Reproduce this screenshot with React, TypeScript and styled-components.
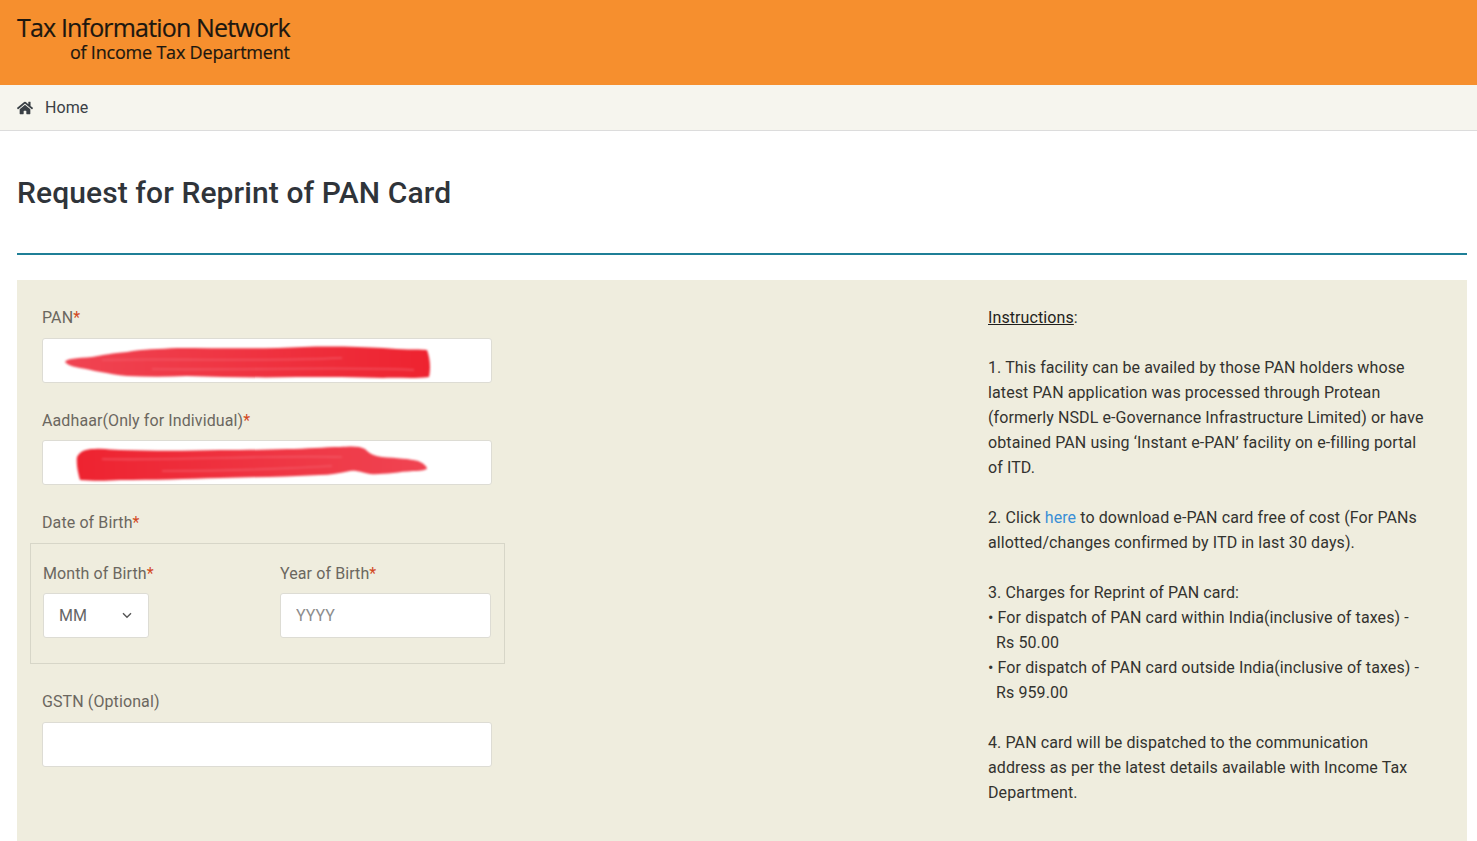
import React from 'react'
import styled, { createGlobalStyle } from 'styled-components'
import { FaHome } from 'react-icons/fa'

const GlobalStyle = createGlobalStyle`
  html, body {
    margin: 0;
    padding: 0;
    background: #fff;
    font-family: Roboto, "Liberation Sans", sans-serif;
    overflow: hidden;
  }
`;

const Banner = styled.header`
  height: 85px;
  background: #f68f2e;
  padding-left: 17px;
  box-sizing: border-box;
`;

const Logo = styled.div`
  display: inline-flex;
  flex-direction: column;
  align-items: flex-end;
  padding-top: 11px;
  font-family: "Open Sans", sans-serif;
  color: #1c1710;
  -webkit-text-stroke: 0.2px #1c1710;
`;

const LogoMain = styled.span`
  font-size: 25px;
  line-height: 32px;
  letter-spacing: -0.83px;
`;

const LogoSub = styled.span`
  font-size: 18px;
  line-height: 19px;
  letter-spacing: -0.2px;
`;

const NavBar = styled.nav`
  height: 46px;
  box-sizing: border-box;
  background: #f6f5ee;
  border-bottom: 1px solid #dcdcdc;
  display: flex;
  align-items: center;
  padding-left: 17px;
  gap: 12px;
  color: #3a4046;
  font-size: 16px;
  letter-spacing: 0.1px;
`;

const Main = styled.main`
  padding: 1px 10px 0 17px;
`;

const Title = styled.h1`
  margin: 0;
  height: 123px;
  box-sizing: border-box;
  padding-top: 41px;
  font-size: 30px;
  line-height: 40px;
  font-weight: 500;
  letter-spacing: 0.1px;
  color: #2f343a;
  border-bottom: 2px solid #1f7f97;
`;

const Panel = styled.section`
  margin-top: 25px;
  background: #efedde;
  padding: 25px 39px 60px 25px;
  display: grid;
  grid-template-columns: 450px 440px;
  justify-content: space-between;
`;

const FormColumn = styled.div`
  display: flex;
  flex-direction: column;
`;

const Field = styled.div`
  display: flex;
  flex-direction: column;
  margin-bottom: 25px;
  &:last-child { margin-bottom: 0; }
`;

const Label = styled.label<{ $gap?: number }>`
  font-size: 16px;
  line-height: 25px;
  color: #6b675f;
  letter-spacing: 0.1px;
  white-space: nowrap;
  margin-bottom: ${p => p.$gap ?? 8}px;
`;

const Req = styled.span`
  color: #d2491e;
`;

const InputWrap = styled.div`
  position: relative;
  height: 45px;
`;

const TextInput = styled.input`
  display: block;
  width: 100%;
  height: 45px;
  box-sizing: border-box;
  border: 1px solid #dddcd4;
  border-radius: 3px;
  background: #fff;
  padding: 0 15px;
  font-family: Roboto, sans-serif;
  font-size: 16px;
  color: #555;
  outline: none;
  &::placeholder { color: #8d8d8d; opacity: 1; }
`;

const Scribble = styled.svg`
  position: absolute;
  left: 0;
  top: 0;
  width: 450px;
  height: 45px;
  pointer-events: none;
  filter: blur(0.9px);
`;

const DobGroup = styled.fieldset`
  margin: 0 -13px 25px -12px;
  padding: 17px 13px 25px 12px;
  border: 1px solid #d7d6c8;
  display: grid;
  grid-template-columns: 106px 211px;
  justify-content: space-between;
`;

const SubField = styled.div`
  display: flex;
  flex-direction: column;
`;

const SelectWrap = styled.div`
  position: relative;
  height: 45px;
`;

const MonthSelect = styled.select`
  appearance: none;
  display: block;
  width: 100%;
  height: 45px;
  box-sizing: border-box;
  border: 1px solid #dddcd4;
  border-radius: 3px;
  background: #fff;
  padding: 0 15px;
  font-family: Roboto, sans-serif;
  font-size: 16px;
  color: #666;
  outline: none;
`;

const Chevron = styled.svg`
  position: absolute;
  right: 17px;
  top: 19px;
  width: 10px;
  height: 7px;
  pointer-events: none;
`;

const Instructions = styled.div`
  font-size: 16px;
  line-height: 25px;
  color: #33332f;
  letter-spacing: 0.1px;
`;

const Heading = styled.u`
  color: #1f1f1c;
`;

const Para = styled.p`
  margin: 25px 0 0;
`;

const Bullet = styled.div`
  padding-left: 8px;
  text-indent: -8px;
`;

const Link = styled.a`
  color: #3a8fd6;
  text-decoration: none;
`;

const Redaction: React.FC<{ id: string; shape: string; streaks: string[]; dark: [string, string] }> = ({ id, shape, streaks, dark }) => (
    <Scribble viewBox="0 0 450 45">
        <defs>
            <linearGradient id={id} x1="0" x2="1" y1="0" y2="0">
                <stop offset="0" stopColor={dark[0]} />
                <stop offset="1" stopColor={dark[1]} />
            </linearGradient>
        </defs>
        <path d={shape} fill={`url(#${id})`} />
        {streaks.map(s => (
            <path key={s} d={s} fill="none" stroke="#f4606c" strokeOpacity="0.7" strokeWidth="1.6" />
        ))}
    </Scribble>
);

const App: React.FC = () => {
    return (
        <>
            <GlobalStyle />
            <Banner>
                <Logo>
                    <LogoMain>Tax Information Network</LogoMain>
                    <LogoSub>of Income Tax Department</LogoSub>
                </Logo>
            </Banner>
            <NavBar>
                <FaHome size={16} />
                <span>Home</span>
            </NavBar>
            <Main>
                <Title>Request for Reprint of PAN Card</Title>
                <Panel>
                    <FormColumn>
                        <Field>
                            <Label>PAN<Req>*</Req></Label>
                            <InputWrap>
                                <TextInput />
                                <Redaction
                                    id="panInk"
                                    dark={['#f04452', '#ee2330']}
                                    shape="M23 24 C24 21 34 20 50 19 C62 17 70 15 85 14 C100 11 118 11 135 10 C180 10 225 11 261 9 C290 8 320 9 341 10 C360 12 375 11 385 12 C388 20 389 30 387 39 C370 41 355 39 341 40 C315 39 285 39 255 39 C220 40 180 39 145 38 C125 39 105 39 85 38 C65 36 50 32 38 30 C32 29 25 27 23 24 Z"
                                    streaks={['M60 22 C120 20 200 24 300 20', 'M110 31 C200 33 290 28 372 32']}
                                />
                            </InputWrap>
                        </Field>
                        <Field>
                            <Label $gap={7}>Aadhaar(Only for Individual)<Req>*</Req></Label>
                            <InputWrap>
                                <TextInput />
                                <Redaction
                                    id="aadhaarInk"
                                    dark={['#ee2330', '#f04452']}
                                    shape="M35 17 C38 11 44 9 52 9 C62 8 70 10 78 10 C110 11 145 11 178 10 C200 10 225 10 245 9 C265 9 282 7 298 7 C310 6 318 6 323 9 C328 14 332 16 340 17 C355 18 368 19 376 21 C381 23 385 26 385 29 C380 31 375 31 371 31 C355 32 340 35 328 34 C320 33 316 30 308 31 C298 33 288 35 278 35 C245 37 210 37 178 38 C145 39 110 40 78 40 C65 41 50 41 38 40 C36 33 34 24 35 17 Z"
                                    streaks={['M60 19 C130 21 220 15 300 17', 'M120 31 C170 31 240 29 290 26']}
                                />
                            </InputWrap>
                        </Field>
                        <Label>Date of Birth<Req>*</Req></Label>
                        <DobGroup>
                            <SubField>
                                <Label $gap={7}>Month of Birth<Req>*</Req></Label>
                                <SelectWrap>
                                    <MonthSelect defaultValue="MM">
                                        <option>MM</option>
                                    </MonthSelect>
                                    <Chevron viewBox="0 0 10 7">
                                        <path d="M1 1.2 L5 5.2 L9 1.2" fill="none" stroke="#555" strokeWidth="1.4" />
                                    </Chevron>
                                </SelectWrap>
                            </SubField>
                            <SubField>
                                <Label $gap={7}>Year of Birth<Req>*</Req></Label>
                                <TextInput placeholder="YYYY" />
                            </SubField>
                        </DobGroup>
                        <Field>
                            <Label>GSTN (Optional)</Label>
                            <TextInput />
                        </Field>
                    </FormColumn>
                    <Instructions>
                        <div><Heading>Instructions</Heading>:</div>
                        <Para>
                            1. This facility can be availed by those PAN holders whose latest PAN application was
                            processed through Protean (formerly NSDL e-Governance Infrastructure Limited) or have
                            obtained PAN using ‘Instant e-PAN’ facility on e-filling portal of ITD.
                        </Para>
                        <Para>
                            2. Click <Link href="#">here</Link> to download e-PAN card free of cost (For PANs
                            allotted/changes confirmed by ITD in last 30 days).
                        </Para>
                        <Para>3. Charges for Reprint of PAN card:</Para>
                        <Bullet>• For dispatch of PAN card within India(inclusive of taxes) - Rs 50.00</Bullet>
                        <Bullet>• For dispatch of PAN card outside India(inclusive of taxes) - Rs 959.00</Bullet>
                        <Para>
                            4. PAN card will be dispatched to the communication address as per the latest details
                            available with Income Tax Department.
                        </Para>
                    </Instructions>
                </Panel>
            </Main>
        </>
    )
}

export default App;
